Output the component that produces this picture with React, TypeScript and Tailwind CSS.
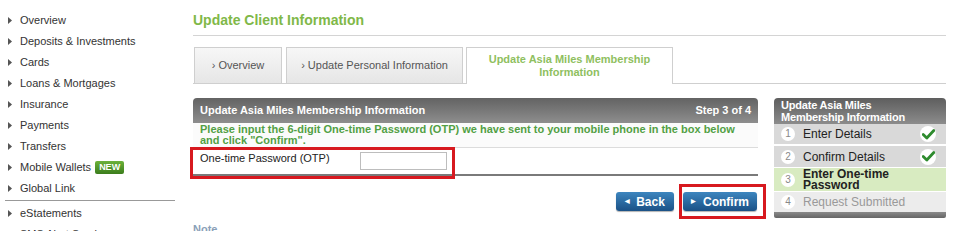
import React from "react";

const Tri = () => (
  <svg width="4" height="7" viewBox="0 0 4 7" className="mr-[8px] shrink-0">
    <path d="M0 0 L4 3.5 L0 7 Z" fill="#555" />
  </svg>
);

const Check = () => (
  <span className="w-[16px] h-[16px] rounded-full bg-white flex items-center justify-center">
    <svg width="13" height="11" viewBox="0 0 13 11">
      <path d="M1.2 5.5 L4.8 9 L11.8 1.5" stroke="#2e8b2e" strokeWidth="2.8" fill="none" strokeLinecap="round" strokeLinejoin="round" />
    </svg>
  </span>
);

const Num = ({ n }: { n: number }) => (
  <span className="w-[14px] h-[14px] rounded-full bg-white text-[10px] text-[#888] flex items-center justify-center mr-[8px] shrink-0 leading-none">{n}</span>
);

export default function App() {
  const items = ["Overview", "Deposits & Investments", "Cards", "Loans & Mortgages", "Insurance", "Payments", "Transfers"];
  return (
    <div className="relative flex h-[231px] w-[954px] overflow-hidden bg-white text-[11px] text-[#333]" style={{ fontFamily: '"Liberation Sans", Arial, sans-serif' }}>
      {/* Sidebar */}
      <div className="w-[193px] shrink-0 pt-[10px]">
        {items.map((t) => (
          <div key={t} className="h-[21px] flex items-center pl-[8px]">
            <Tri />
            <span>{t}</span>
          </div>
        ))}
        <div className="h-[21px] flex items-center pl-[8px]">
          <Tri />
          <span>Mobile Wallets</span>
          <span className="ml-[4px] h-[13px] px-[4px] rounded-[2px] bg-gradient-to-b from-[#6bb23a] to-[#3b7d1c] text-white text-[9px] font-bold flex items-center leading-none">NEW</span>
        </div>
        <div className="h-[21px] flex items-center pl-[8px]">
          <Tri />
          <span>Global Link</span>
        </div>
        <div className="ml-[5px] w-[170px] border-t border-[#999] mt-[1px] mb-[2px]" />
        <div className="h-[21px] flex items-center pl-[8px]">
          <Tri />
          <span>eStatements</span>
        </div>
        <div className="h-[21px] flex items-center pl-[8px]">
          <Tri />
          <span>SMS Alert Service</span>
        </div>
      </div>

      {/* Main */}
      <div className="w-[753px] shrink-0">
        <div className="h-[36px] border-b border-[#d4d4d4] flex items-end pb-[4px]">
          <span className="text-[14px] font-bold text-[#80b848]">Update Client Information</span>
        </div>
        <div className="mt-[12px] h-[36px] flex items-end border-b border-[#cfcfcf]">
          <div className="ml-[1px] w-[88px] h-[36px] border border-b-0 border-[#cfcfcf] bg-gradient-to-b from-[#f7f7f7] to-[#e6e6e6] flex items-center justify-center text-[#555]">› Overview</div>
          <div className="ml-[4px] w-[177px] h-[36px] border border-b-0 border-[#cfcfcf] bg-gradient-to-b from-[#f7f7f7] to-[#e6e6e6] flex items-center justify-center text-[#555]">› Update Personal Information</div>
          <div className="ml-[3px] w-[207px] h-[37px] -mb-px border border-b-0 border-[#cfcfcf] bg-white flex items-center justify-center text-center font-bold text-[#8fbf5f] leading-[13px]">Update Asia Miles Membership<br />Information</div>
        </div>

        <div className="mt-[14px] flex">
          {/* Form panel */}
          <div className="w-[565px] shrink-0">
            <div className="h-[25px] rounded-t-[4px] bg-gradient-to-b from-[#636363] to-[#8e8e8e] flex items-center justify-between px-[7px] text-white font-bold">
              <span>Update Asia Miles Membership Information</span>
              <span>Step 3 of 4</span>
            </div>
            <div className="h-[25px] overflow-hidden bg-[#fbfbfb] border-b border-[#dcdcdc] pl-[7px] pt-[1px] font-bold text-[#52a044] leading-[11px] whitespace-nowrap">
              Please input the 6-digit One-time Password (OTP) we have sent to your mobile phone in the box below<br />and click "Confirm".
            </div>
            <div className="h-[26px] flex items-center bg-white">
              <span className="ml-[7px] w-[160px] text-[#222] -mt-[5px]">One-time Password (OTP)</span>
              <div className="w-[87px] h-[18px] border border-[#bdbdbd] bg-white" />
            </div>
            <div className="h-[2px] bg-[#7a7a7a]" />
            <div className="mt-[16px] flex justify-end gap-[9px]">
              <button className="w-[58px] h-[19px] rounded-[3px] bg-gradient-to-b from-[#3d86bf] to-[#1b5186] text-white font-bold text-[12px] flex items-center justify-center shadow-[0_1px_1px_rgba(0,0,0,0.3)]">
                <span className="text-[6px] mr-[6px]">◀</span>Back
              </button>
              <button className="w-[74px] h-[19px] rounded-[3px] bg-gradient-to-b from-[#3d86bf] to-[#1b5186] text-white font-bold text-[12px] flex items-center justify-center mr-[1px] shadow-[0_1px_1px_rgba(0,0,0,0.3)]">
                <span className="text-[6px] mr-[7px]">▶</span>Confirm
              </button>
            </div>
            <div className="mt-[10px] text-[#8aa0b8] font-bold">Note</div>
          </div>

          {/* Step panel */}
          <div className="ml-[16px] w-[172px] shrink-0">
            <div className="h-[26px] rounded-t-[4px] bg-gradient-to-b from-[#5e5e5e] to-[#8c8c8c] px-[7px] pt-[1px] text-white font-bold leading-[12px] tracking-[-0.2px]">
              Update Asia Miles<br />Membership Information
            </div>
            <div className="h-[22px] bg-[#d9d9d9] flex items-center pl-[7px] pr-[10px] border-b-2 border-white text-[12px]">
              <Num n={1} />
              <span className="flex-1 text-[#222]">Enter Details</span>
              <Check />
            </div>
            <div className="h-[22px] bg-[#d9d9d9] flex items-center pl-[7px] pr-[10px] border-b border-white text-[12px]">
              <Num n={2} />
              <span className="flex-1 text-[#222]">Confirm Details</span>
              <Check />
            </div>
            <div className="h-[24px] bg-[#d8ebc1] flex items-center pl-[7px] border-b border-white text-[12px]">
              <Num n={3} />
              <span className="font-bold text-[#222] leading-[11px]">Enter One-time<br />Password</span>
            </div>
            <div className="h-[20px] bg-[#ececec] flex items-center pl-[7px] text-[12px]">
              <Num n={4} />
              <span className="text-[#999]">Request Submitted</span>
            </div>
            <div className="h-[6px] rounded-b-[2px] bg-gradient-to-b from-[#8a8a8a] to-[#666]" />
          </div>
        </div>
      </div>

      {/* Annotation boxes */}
      <div className="absolute left-[190px] top-[147px] w-[265px] h-[32px] border-[3px] border-[#d7191f] pointer-events-none" />
      <div className="absolute left-[679px] top-[184px] w-[87px] h-[35px] border-[3px] border-[#d7191f] pointer-events-none" />
    </div>
  );
}
